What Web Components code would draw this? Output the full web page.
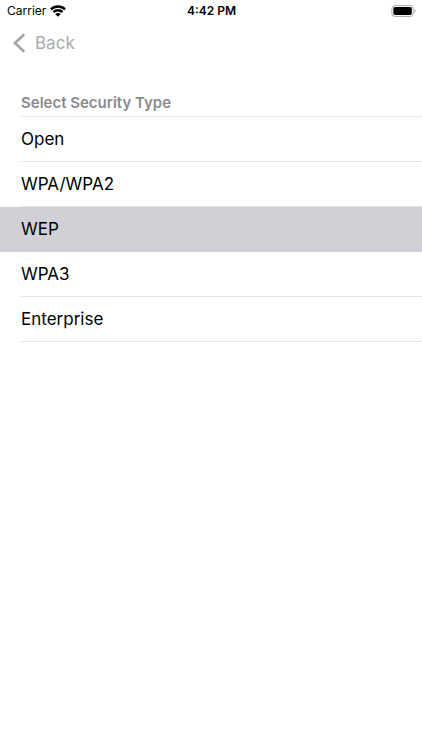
<!DOCTYPE html>
<html lang="en">
<head>
  <meta charset="utf-8">
  <meta name="viewport" content="width=device-width, initial-scale=1">
  <title>Select Security Type</title>
  <style>
    body {
      margin: 0;
      background-color: #fff;
      color: #000;
      font-family: Inter, "Liberation Sans", sans-serif;
    }
  </style>
</head>
<body>
  <status-bar carrier="Carrier" time="4:42 PM"></status-bar>
  <nav-bar>Back</nav-bar>
  <main>
    <option-list heading="Select Security Type">
      <option-row>Open</option-row>
      <option-row>WPA/WPA2</option-row>
      <option-row selected>WEP</option-row>
      <option-row>WPA3</option-row>
      <option-row>Enterprise</option-row>
    </option-list>
  </main>

  <script>
    class StatusBar extends HTMLElement {
      constructor() {
        super();
        this.shadowDOM = this.attachShadow({ mode: 'open' });
      }

      connectedCallback() {
        this.render();
      }

      render() {
        this.shadowDOM.innerHTML = `
          <style>
            :host {
              display: grid;
              grid-template-columns: 1fr auto 1fr;
              align-items: center;
              height: 21px;
              padding: 0 6px 0 7px;
              font-size: 12px;
            }

            .carrier {
              display: flex;
              align-items: center;
              gap: 4px;
            }

            .time {
              font-weight: 600;
            }

            .battery {
              justify-self: end;
            }

            svg {
              display: block;
            }
          </style>

          <span class="carrier">
            <span>${this.getAttribute('carrier')}</span>
            <svg width="16" height="12" viewBox="0 0 16 12" aria-hidden="true">
              <g fill="none" stroke="#000" stroke-width="2.3">
                <path d="M.9 4.4C4.8 .5 11.2 .5 15.1 4.4"/>
                <path d="M3.4 7.1C6 4.6 10 4.6 12.6 7.1"/>
              </g>
              <path d="M5.2 9C6.8 7.5 9.2 7.5 10.8 9L8 11.8Z"/>
            </svg>
          </span>
          <span class="time">${this.getAttribute('time')}</span>
          <svg class="battery" width="25" height="12" viewBox="0 0 25 12" aria-hidden="true">
            <rect x=".9" y=".6" width="21.4" height="10.8" rx="3" fill="none" stroke="#a6a6a6"/>
            <rect x="2.4" y="2.1" width="18.4" height="7.8" rx="1.6"/>
            <path d="M23.6 4.2C25 4.8 25 7.2 23.6 7.8Z" fill="#999"/>
          </svg>`;
      }
    }

    class NavBar extends HTMLElement {
      constructor() {
        super();
        this.shadowDOM = this.attachShadow({ mode: 'open' });
      }

      connectedCallback() {
        this.render();
      }

      render() {
        this.shadowDOM.innerHTML = `
          <style>
            :host {
              display: block;
              padding: 0 13px;
            }

            button {
              display: flex;
              align-items: center;
              gap: 9px;
              height: 44px;
              padding: 0;
              border: 0;
              background: none;
              color: #aaa;
              font: inherit;
              font-size: 17px;
              cursor: pointer;
            }
          </style>

          <button type="button">
            <svg width="13" height="20" viewBox="0 0 13 20" aria-hidden="true">
              <path d="M11.2 1.2L2 10L11.2 18.8" fill="none" stroke="#a6a6a6" stroke-width="2.7"/>
            </svg>
            <slot></slot>
          </button>`;
      }
    }

    class OptionList extends HTMLElement {
      constructor() {
        super();
        this.shadowDOM = this.attachShadow({ mode: 'open' });
      }

      connectedCallback() {
        this.render();
        this.addEventListener('click', (event) => {
          const picked = event.target.closest('option-row');
          if (!picked) return;
          this.querySelectorAll('option-row').forEach((row) => {
            row.toggleAttribute('selected', row === picked);
          });
        });
      }

      render() {
        this.shadowDOM.innerHTML = `
          <style>
            :host {
              display: block;
              padding-top: 28px;
            }

            h2 {
              margin: 0 0 0 21px;
              padding-bottom: 3px;
              border-bottom: 1px solid #e4e4e6;
              color: #8a8a8e;
              font-size: 15px;
              font-weight: 600;
              line-height: 20px;
            }
          </style>

          <h2>${this.getAttribute('heading')}</h2>
          <slot></slot>`;
      }
    }

    class OptionRow extends HTMLElement {
      static get observedAttributes() {
        return ['selected'];
      }

      constructor() {
        super();
        this.shadowDOM = this.attachShadow({ mode: 'open' });
      }

      connectedCallback() {
        this.render();
      }

      attributeChangedCallback() {
        this.render();
      }

      render() {
        this.shadowDOM.innerHTML = `
          <style>
            :host {
              display: block;
            }

            button {
              display: block;
              width: 100%;
              padding: 0 0 0 21px;
              border: 0;
              background: none;
              color: inherit;
              font: inherit;
              font-size: 17px;
              line-height: 44px;
              text-align: left;
              cursor: pointer;
            }

            span {
              display: block;
              border-bottom: 1px solid #e4e4e6;
            }

            :host([selected]) button {
              background-color: #d1d0d7;
            }

            :host([selected]) span {
              border-color: #d1d0d7;
            }
          </style>

          <button type="button" aria-pressed="${this.hasAttribute('selected')}">
            <span><slot></slot></span>
          </button>`;
      }
    }

    customElements.define('status-bar', StatusBar);
    customElements.define('nav-bar', NavBar);
    customElements.define('option-list', OptionList);
    customElements.define('option-row', OptionRow);
  </script>
</body>
</html>
